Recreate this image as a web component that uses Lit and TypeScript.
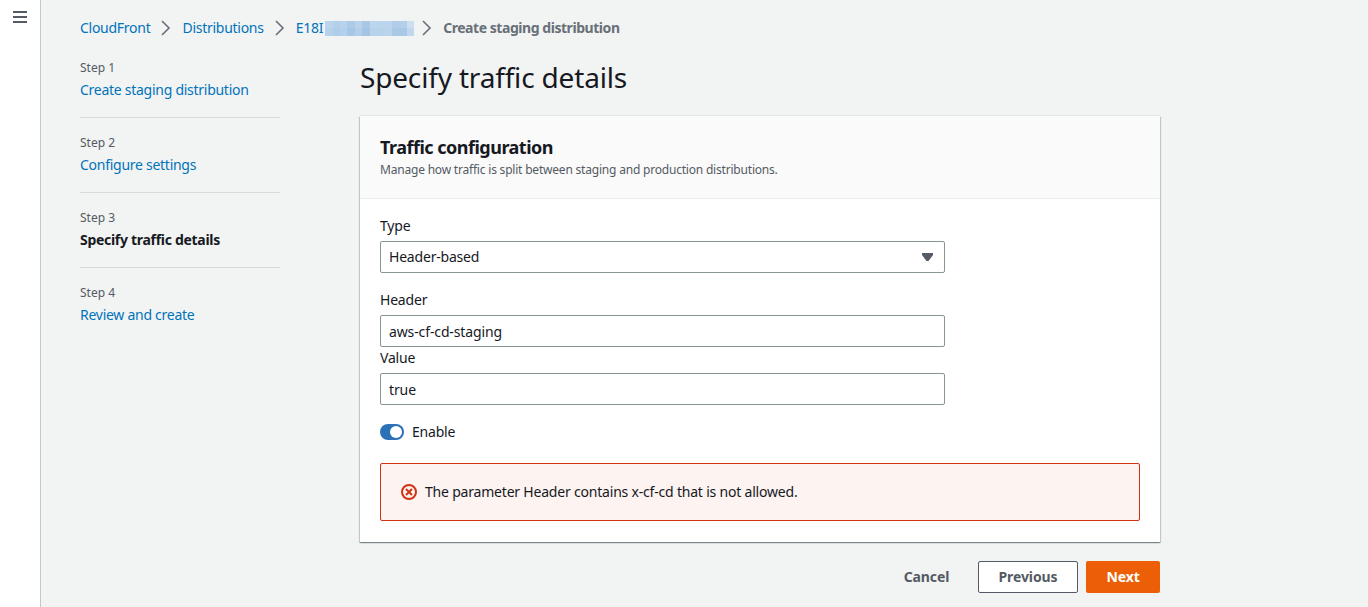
import { LitElement, html, css } from "lit";
import { customElement } from "lit/decorators.js";

const steps = [
  { n: "Step 1", label: "Create staging distribution", active: false },
  { n: "Step 2", label: "Configure settings", active: false },
  { n: "Step 3", label: "Specify traffic details", active: true },
  { n: "Step 4", label: "Review and create", active: false },
];
const blur = [
  "#bcd5ec","#b4cfe9","#b9d2eb","#adcae7","#b9d3eb","#a8c8e6","#bed6ed","#bad4ec","#bdd5ec","#b0cce8","#b4cfe9","#ccdff0",
  "#b6d1ea","#afcce8","#b5d0ea","#a6c7e6","#b2ceea","#a3c5e6","#b8d2eb","#b6d1ea","#bad3ec","#a9c9e7","#a8c8e6","#c0d7ed",
];

@customElement("app-root")
export class AppRoot extends LitElement {
  static styles = css`
    :host { display: block; height: 607px; overflow: hidden; background: #f2f3f3; color: #16191f;
      font-family: "Noto Sans", "Open Sans", sans-serif; font-size: 14px; line-height: 20px; letter-spacing: -0.2px; }
    * { box-sizing: border-box; }
    .page { display: flex; height: 607px; }
    .rail { width: 41px; flex: none; background: #fff; border-right: 1px solid #c4c8c8; padding: 11px 0 0 13px; }
    .rail svg { display: block; }
    .main { flex: 1; padding: 18px 0 0 39px; }
    .crumbs { display: flex; align-items: center; height: 20px; letter-spacing: -0.27px; }
    .crumbs a, .nav a { color: #0073bb; text-decoration: none; }
    .crumbs .sep { margin: 0 10px; display: block; flex: none; }
    .crumbs .sep.last { margin-left: 8px; }
    .crumbs .cur { color: #687078; font-weight: 700; letter-spacing: -0.45px; }
    .blur { display: grid; grid-template-columns: repeat(12, 1fr); width: 89px; height: 15px; margin-left: 2px; margin-right: -1px; }
    .blur i { display: block; }
    .cols { display: flex; margin-top: 5px; }
    .nav { width: 200px; flex: none; margin-right: 80px; }
    .step { height: 75px; padding-top: 17px; border-bottom: 1px solid #d5dbdb; }
    .step:last-child { border-bottom: none; }
    .step .n { font-size: 12px; line-height: 16px; color: #545b64; letter-spacing: 0; }
    .step .l { margin-top: 4px; letter-spacing: -0.27px; }
    .step .act { font-weight: 700; color: #16191f; letter-spacing: -0.3px; }
    .content { width: 800px; flex: none; }
    h1 { margin: 0; font-size: 28px; line-height: 36px; font-weight: 400; padding-top: 16px; height: 73px; letter-spacing: -0.17px; }
    .card { background: #fff; height: 426px; box-shadow: 0 1px 1px 0 rgba(0,28,36,.3), 1px 1px 1px 0 rgba(0,28,36,.15), -1px 1px 1px 0 rgba(0,28,36,.15), 0 -1px 1px 0 rgba(0,28,36,.06); }
    .head { height: 83px; background: #fafafa; border-bottom: 1px solid #eaeded; padding: 19px 20px 0; }
    h2 { margin: 0; font-size: 18px; line-height: 24px; font-weight: 700; letter-spacing: -0.5px; }
    .desc { font-size: 12px; line-height: 16px; color: #545b64; margin-top: 3px; }
    .body { padding: 17px 20px 0; }
    .lab { line-height: 20px; }
    .ctl { width: 565px; height: 32px; background: #fff; border: 1px solid #879596; border-radius: 2px; margin-top: 5px;
      padding: 0 11px 0 8px; display: flex; align-items: center; justify-content: space-between; }
    .inp { padding-top: 2px; letter-spacing: -0.12px; }
    .gap1 { margin-top: 17px; }
    .gap2 { margin-top: 1px; }
    .toggle { display: flex; align-items: center; gap: 8px; margin-top: 17px; height: 20px; }
    .sw { width: 24px; height: 16px; border-radius: 8px; background: #2a71b8; padding: 2px 2px 2px 10px; display: block; }
    .sw i { display: block; width: 12px; height: 12px; border-radius: 50%; background: #fff; }
    .alert { margin-top: 21px; height: 58px; border: 1px solid #d13212; border-radius: 2px; background: #fdf3f1;
      display: flex; align-items: center; gap: 8px; padding-left: 20px; }
    .alert svg { flex: none; }
    .actions { display: flex; justify-content: flex-end; align-items: center; margin-top: 19px; gap: 8px; font-weight: 700; letter-spacing: -0.1px; }
    .btn { height: 32px; display: flex; align-items: center; justify-content: center; border-radius: 2px; }
    .cancel { color: #545b64; width: 87px; }
    .prev { color: #545b64; width: 100px; background: #fff; border: 1px solid #545b64; }
    .next { color: #fff; width: 74px; background: #ec5f06; }
  `;

  private chev(last = false) {
    return html`<svg class="sep ${last ? "last" : ""}" width="12" height="16" viewBox="0 0 12 16" fill="none" stroke="#687078" stroke-width="1.6"><path d="M2 1l7 7-7 7"/></svg>`;
  }

  render() {
    return html`<div class="page">
      <div class="rail">
        <svg width="14" height="12" viewBox="0 0 14 12" fill="none" stroke="#545b64" stroke-width="2"><path d="M0 1h14M0 6h14M0 11h14"/></svg>
      </div>
      <div class="main">
        <div class="crumbs">
          <a>CloudFront</a>${this.chev()}<a>Distributions</a>${this.chev()}<a>E18I</a>
          <span class="blur">${blur.map((c) => html`<i style="background:${c}"></i>`)}</span>
          ${this.chev(true)}<span class="cur">Create staging distribution</span>
        </div>
        <div class="cols">
          <div class="nav">
            ${steps.map((s) => html`<div class="step"><div class="n">${s.n}</div>
              <div class="l">${s.active ? html`<span class="act">${s.label}</span>` : html`<a>${s.label}</a>`}</div></div>`)}
          </div>
          <div class="content">
            <h1>Specify traffic details</h1>
            <div class="card">
              <div class="head">
                <h2>Traffic configuration</h2>
                <div class="desc">Manage how traffic is split between staging and production distributions.</div>
              </div>
              <div class="body">
                <div class="lab">Type</div>
                <div class="ctl"><span>Header-based</span>
                  <svg width="11" height="8" viewBox="0 0 11 8"><path d="M0 0h11v2L6.5 8h-2L0 2z" fill="#545b64"/></svg></div>
                <div class="lab gap1">Header</div>
                <div class="ctl inp">aws-cf-cd-staging</div>
                <div class="lab gap2">Value</div>
                <div class="ctl inp">true</div>
                <div class="toggle"><span class="sw"><i></i></span><span>Enable</span></div>
                <div class="alert">
                  <svg width="16" height="16" viewBox="0 0 16 16" fill="none" stroke="#d13212" stroke-width="2"><circle cx="8" cy="8" r="7"/><path d="M5 5l6 6M11 5l-6 6"/></svg>
                  <span>The parameter Header contains x-cf-cd that is not allowed.</span>
                </div>
              </div>
            </div>
            <div class="actions">
              <div class="btn cancel">Cancel</div>
              <div class="btn prev">Previous</div>
              <div class="btn next">Next</div>
            </div>
          </div>
        </div>
      </div>
    </div>`;
  }
}
